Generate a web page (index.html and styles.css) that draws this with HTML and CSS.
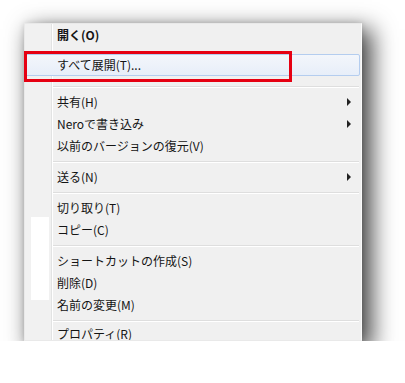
FILE: index.html
```html
<!DOCTYPE html>
<html lang="ja">

<head>
    <meta charset="UTF-8">
    <meta name="viewport" content="width=device-width, initial-scale=1.0">
    <title>Context menu</title>
    <link rel="stylesheet" href="styles.css">
</head>

<body>
    <div class="frame">
        <div class="menu">
            <div class="gutter-block"></div>

            <div class="item bold">開く(O)</div>
            <div class="gap"></div>
            <div class="item hover">すべて展開(T)...</div>
            <div class="sep first"></div>

            <div class="item sub">共有(H)</div>
            <div class="item sub">Neroで書き込み</div>
            <div class="item">以前のバージョンの復元(V)</div>
            <div class="sep"></div>

            <div class="item sub">送る(N)</div>
            <div class="sep"></div>

            <div class="item">切り取り(T)</div>
            <div class="item">コピー(C)</div>
            <div class="sep"></div>

            <div class="item">ショートカットの作成(S)</div>
            <div class="item">削除(D)</div>
            <div class="item">名前の変更(M)</div>
            <div class="sep"></div>

            <div class="item last">プロパティ(R)</div>
        </div>
        <div class="mark"></div>
    </div>
</body>

</html>
```

FILE: styles.css
```css
html,
body {
    margin: 0;
    padding: 0;
    background: #fff;
}

body {
    font-family: "Noto Sans CJK JP", "Noto Sans", sans-serif;
    font-size: 12px;
    color: #141414;
}

.frame {
    position: relative;
    width: 338px;
    margin: 23px 0 0 24px;
}

.menu {
    position: relative;
    box-sizing: border-box;
    width: 338px;
    height: 318px;
    border: 1px solid #e9e9e9;
    border-right-color: #fbfbfb;
    overflow: hidden;
    background: linear-gradient(to right, #f1f1f1 26px, #e2e3e3 26px 27px, #fff 27px 28px, #f0f0f0 28px);
    box-shadow: 0 0 6px rgba(0, 0, 0, 0.12), 8px 8px 22px 2px rgba(0, 0, 0, 0.72);
    display: flex;
    flex-direction: column;
}

.gutter-block {
    position: absolute;
    left: 6px;
    top: 193px;
    width: 18px;
    height: 83px;
    background: #fff;
}

.mark {
    position: absolute;
    left: 0;
    top: 28px;
    width: 262px;
    height: 25px;
    border: 3px solid #e60012;
}

.item {
    position: relative;
    flex: none;
    height: 22px;
    line-height: 22px;
    padding-left: 32px;
    white-space: nowrap;
}

.item.bold {
    font-weight: bold;
}

.item.hover {
    box-sizing: border-box;
    margin: 0 1px 0 0;
    padding-left: 31px;
    line-height: 20px;
    border: 1px solid #b4cdef;
    border-radius: 2px;
    background: linear-gradient(#f3f6fb, #e7eef9);
}

.item.last {
    height: 18px;
    line-height: 17px;
}

.item.sub::after {
    content: "";
    position: absolute;
    right: 10px;
    top: 7px;
    border-left: 4px solid #222;
    border-top: 4px solid transparent;
    border-bottom: 4px solid transparent;
}

.gap {
    flex: none;
    height: 8px;
}

.sep {
    flex: none;
    height: 9px;
    margin: 0 2px 0 28px;
    box-sizing: border-box;
    padding-top: 4px;
}

.sep::before {
    content: "";
    display: block;
    height: 1px;
    background: #dedede;
    border-bottom: 1px solid #fff;
}

.sep.first {
    margin-top: 6px;
}
```
